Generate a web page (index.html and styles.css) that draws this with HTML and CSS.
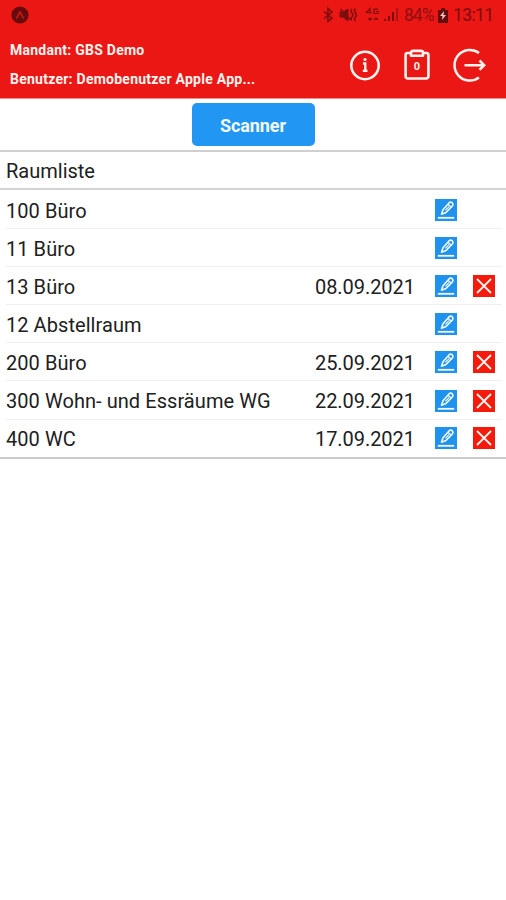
FILE: index.html
```
<!DOCTYPE html>
<html lang="de">
<head>
<meta charset="utf-8">
<title>Raumliste</title>
<link rel="stylesheet" href="styles.css">
</head>
<body>
<svg class="sprite" aria-hidden="true">
  <symbol id="edit" viewBox="0 0 22 22">
    <rect width="22" height="22" fill="#1f92ee"/>
    <g fill="none" stroke="#f3faff" stroke-width="1.6" stroke-linejoin="round">
      <path d="M6.500 15.200 8 10.700 14.200 3.700Q15.600 2.600 17.200 3.700 18.600 5.100 17.600 6.700L11 13.500Z"/>
      <path d="M13 5.200 16.300 8.200M10.500 11.400 14 7.700" stroke-width="1.200"/>
      <path d="M2.800 18.800H19.200" stroke-width="1.800"/>
    </g>
  </symbol>
  <symbol id="delete" viewBox="0 0 22 22">
    <rect width="22" height="22" fill="#f51b0c"/>
    <path d="M4 4 18 18M18 4 4 18" stroke="#fff4ee" stroke-width="1.8"/>
  </symbol>
</svg>
<header class="header">
  <div class="status">
    <svg class="app" width="18" height="18" viewBox="0 0 18 18"><circle cx="9" cy="9" r="8.6" fill="#650b0b"/><path d="M5.2 12.5Q7.5 9.7 8.7 6H9.3Q10.5 9.7 12.8 12.5" fill="none" stroke="#c41818" stroke-width="1.7"/></svg>
    <svg class="signals" width="80" height="18" viewBox="0 0 80 18" fill="none" stroke="#7c0e0e">
      <path d="M1 5.5 9 12 5 15.500V2.500L9 6 1 12.500" stroke-width="1.600"/>
      <path d="M17 6H20L25 3V15L20 11H17Z" fill="#7c0e0e"/><path d="M17.500 3 28 14M29 3Q27 5 29 7T29 11 29 14M32.500 2.500Q30.500 5 32.500 7T32.500 11 32.500 15" stroke-width="1.500"/>
      <path d="M47 8V2.500L43.500 6.500H48.500M55 3.200H51V7.500H55V5.500H53" stroke-width="1.200"/>
      <path d="M44.500 12H49.500L47 15ZM50.500 14H55.500L53 11Z" fill="#7c0e0e" stroke="none"/>
      <path d="M62 13V15M66 10V15M70 6V15" stroke-width="2"/><path d="M74 2V15" stroke="#ae1212" stroke-width="2"/>
    </svg>
    <span class="percent">84%</span>
    <svg class="battery" width="10" height="15" viewBox="0 0 10 15"><path d="M3 0H7V2H10V15H0V2H3Z" fill="#650b0b"/><path d="M6 3 2 8H4.500L4 12 8 7H5.500Z" fill="#f5c4c0"/></svg>
    <span class="time">13:11</span>
  </div>
  <div class="bar">
    <div class="account">
      <div class="client">Mandant: GBS Demo</div>
      <div class="user">Benutzer: Demobenutzer Apple App...</div>
    </div>
    <div class="actions">
      <svg width="32" height="34" viewBox="0 0 32 34" fill="none" stroke="#fff3ef"><circle cx="17" cy="17.500" r="13.700" stroke-width="2.600"/><path d="M15 15.500H17.300V22.500M14.800 22.800H19.500" stroke-width="2.300"/><circle cx="17" cy="11.500" r="1.600" fill="#fff3ef" stroke="none"/></svg>
      <span class="clip">
        <svg width="28" height="34" viewBox="0 0 28 34" fill="none" stroke="#fff3ef" stroke-width="2.600" stroke-linejoin="round"><path d="M8 5H4.500Q2.600 5 2.600 7V28Q2.600 30.500 5 30.500H23Q25.400 30.500 25.400 28V7Q25.400 5 23.500 5H20"/><path d="M10 2.900H18Q20 2.900 20 4.500V7.800H8V4.500Q8 2.900 10 2.900Z"/></svg>
        <span class="count">0</span>
      </span>
      <svg class="logout" width="36" height="34" viewBox="0 0 36 34" fill="none" stroke="#fff3ef" stroke-width="2.500"><path d="M28 5A15.300 15.300 0 1 0 28 29.500"/><path d="M13.500 17.200H33.500M28.500 12.500 33.200 17.200 28.500 21.900"/></svg>
    </div>
  </div>
</header>
<main>
  <div class="scan"><button class="scanner">Scanner</button></div>
  <h1 class="title">Raumliste</h1>
  <ul class="rooms">
    <li class="room"><span class="name">100 Büro</span><span class="date"></span><svg class="edit"><use href="#edit"/></svg></li>
    <li class="room"><span class="name">11 Büro</span><span class="date"></span><svg class="edit"><use href="#edit"/></svg></li>
    <li class="room"><span class="name">13 Büro</span><span class="date">08.09.2021</span><svg class="edit"><use href="#edit"/></svg><svg class="delete"><use href="#delete"/></svg></li>
    <li class="room"><span class="name">12 Abstellraum</span><span class="date"></span><svg class="edit"><use href="#edit"/></svg></li>
    <li class="room"><span class="name">200 Büro</span><span class="date">25.09.2021</span><svg class="edit"><use href="#edit"/></svg><svg class="delete"><use href="#delete"/></svg></li>
    <li class="room"><span class="name">300 Wohn- und Essräume WG</span><span class="date">22.09.2021</span><svg class="edit"><use href="#edit"/></svg><svg class="delete"><use href="#delete"/></svg></li>
    <li class="room"><span class="name">400 WC</span><span class="date">17.09.2021</span><svg class="edit"><use href="#edit"/></svg><svg class="delete"><use href="#delete"/></svg></li>
  </ul>
</main>
</body>
</html>
```
FILE: styles.css
```
* { box-sizing: border-box; }
body { margin: 0; background: #fff; color: #202020; font-family: Roboto, "Liberation Sans", sans-serif; font-size: 20px; }
.sprite { position: absolute; width: 0; height: 0; }
svg { display: block; flex: none; }
.header { height: 99px; background: #ea1714; border-bottom: 1px solid #f28d89; }
.status { display: flex; align-items: center; height: 31px; padding: 0 13px 1px 11px; color: #8d1010; font-size: 17.5px; }
.signals { margin-left: auto; }
.percent { width: 30px; margin-left: 1px; white-space: nowrap; letter-spacing: -1px; }
.battery { margin-left: 4px; }
.time { width: 40px; margin-left: 5px; letter-spacing: -.6px; color: #7c0e0e; }
.bar { display: flex; justify-content: space-between; height: 67px; padding: 5px 19px 0 10px; }
.account { color: #fff3ef; font-size: 14px; font-weight: 700; line-height: 29px; letter-spacing: .25px; white-space: nowrap; }
.actions { display: flex; gap: 23px; padding-top: 12px; }
.clip { position: relative; }
.count { position: absolute; left: 0; width: 28px; top: 12px; color: #fff3ef; text-align: center; font-size: 11px; line-height: 14px; font-weight: 700; }
.logout { margin-left: -3px; }
.scan { display: flex; justify-content: center; height: 53px; padding-top: 4px; border-bottom: 2px solid #cfcfcf; }
.scanner { width: 123px; height: 43px; padding: 2px 0 0; border: 0; border-radius: 5px; background: #2196f3; color: #f4faff; font: 700 18px Roboto, sans-serif; letter-spacing: -.1px; }
.title { margin: 0; height: 38px; padding-left: 6px; border-bottom: 2px solid #d3d3d3; font-size: 20px; font-weight: 400; line-height: 38px; }
.rooms { margin: 0; padding: 1px 0 0 6px; list-style: none; border-bottom: 2px solid #cbcbcb; }
.room { display: grid; grid-template-columns: 1fr 104.5px 22px 22px; column-gap: 15.5px; align-items: center; height: 38.1px; padding-right: 11.5px; white-space: nowrap; background: linear-gradient(#efefef, #efefef) bottom left / calc(100% - 4px) 1px no-repeat; }
.room:last-child { height: 37.4px; background: none; }
.name { width: 0; line-height: 24px; padding-top: 1px; letter-spacing: .06px; }
.date { padding-top: 1px; line-height: 24px; letter-spacing: -.06px; }
.edit, .delete { width: 22px; height: 22px; }
```
